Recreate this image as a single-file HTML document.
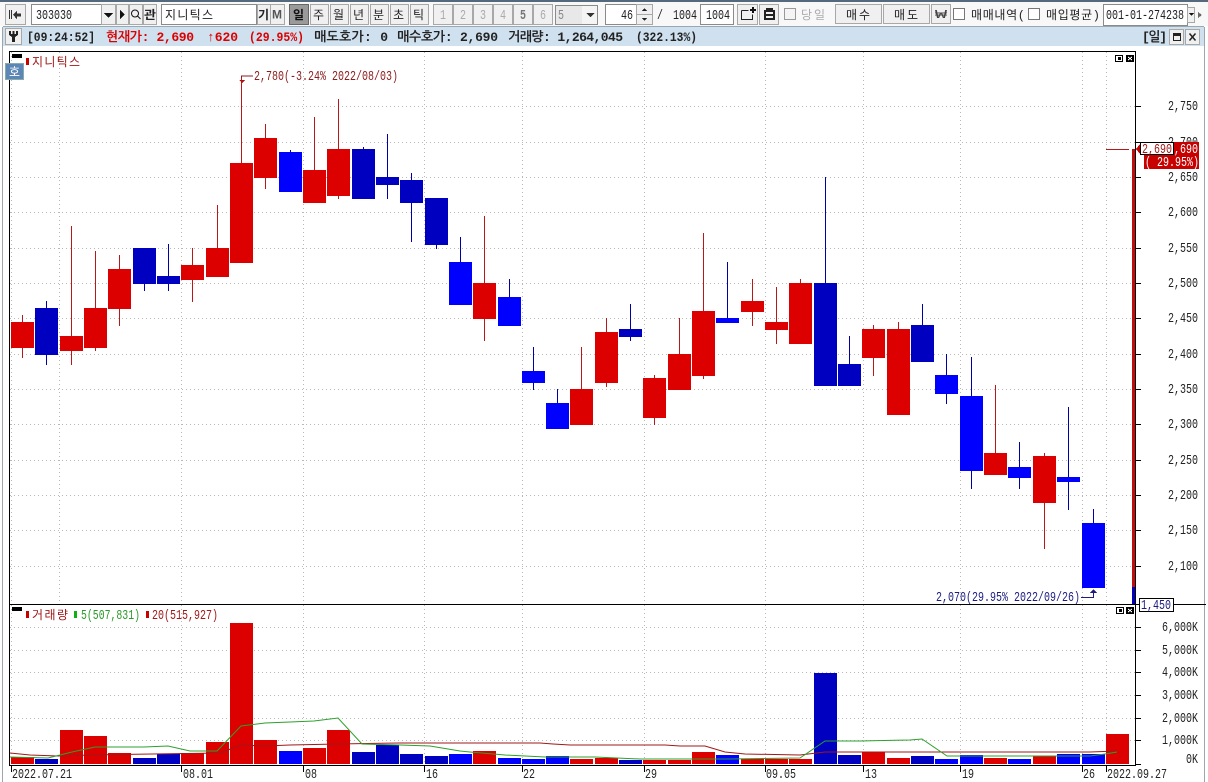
<!DOCTYPE html>
<html><head><meta charset="utf-8"><title>차트</title>
<style>
html,body{margin:0;padding:0;background:#fff;width:1208px;height:782px;overflow:hidden}
svg{display:block}
text{font-family:"Liberation Mono","NanumGothic","Noto Sans CJK KR",monospace;font-size:14px;fill:#222}
.k{font-family:"Liberation Mono","Noto Sans CJK KR","NanumGothic",sans-serif;font-size:12px}
.b{font-weight:bold;font-size:13px}
.btn{fill:#f0f0f0;stroke:#a8a8a8}
.inp{fill:#fff;stroke:#8a8a8a}
</style></head><body>
<svg xmlns="http://www.w3.org/2000/svg" width="1208" height="782" viewBox="0 0 1208 782" shape-rendering="crispEdges">
<rect width="1208" height="782" fill="#fff"/>
<rect width="1208" height="2" fill="#56687c"/>
<rect y="2" width="1208" height="24" fill="#f8f8f8"/>
<rect x="2" y="27" width="1" height="755" fill="#a0a4ac"/>
<rect x="1204" y="27" width="1" height="755" fill="#a0a4ac"/>
<rect x="3" y="27" width="1201" height="19" fill="#cfe0ee"/>
<rect x="3" y="26" width="1201" height="1" fill="#9aa8b4"/>

<!-- toolbar -->
<rect class="btn" x="5.5" y="4.5" width="20" height="20"/>
<path d="M9 10h1v9h-1zM11 10h1v9h-1zM13 14.5l4-4v3h4v3h-4v3z" fill="#333"/>
<rect class="inp" x="31.5" y="4.5" width="70" height="20"/>
<text x="36" y="19" textLength="36" lengthAdjust="spacingAndGlyphs">303030</text>
<rect class="btn" x="101.5" y="4.5" width="14" height="20"/><path d="M104 13h9l-4.500 5z" fill="#111"/>
<rect class="btn" x="116.500" y="4.500" width="12" height="20"/><path d="M120 10l5 4.500-5 4.500z" fill="#111"/>
<rect class="btn" x="129.500" y="4.500" width="13" height="20"/>
<circle cx="135" cy="13.500" r="3.500" fill="none" stroke="#111" shape-rendering="auto"/><path d="M137.500 16l3 3" stroke="#111" shape-rendering="auto"/>
<rect class="btn" x="143.500" y="4.500" width="13" height="20"/>
<text class="k" x="144" y="19" textLength="12" lengthAdjust="spacingAndGlyphs" style="font-weight:bold">관</text>
<rect class="inp" x="161.500" y="4.500" width="95" height="20"/>
<text class="k" x="165" y="19" textLength="48">지니틱스</text>
<rect class="btn" x="257.500" y="4.500" width="13" height="20"/>
<text class="k" x="258" y="19" style="font-weight:bold">기</text>
<rect class="btn" x="270.500" y="4.500" width="14" height="20"/>
<text x="272" y="18.500" style="font-family:'Liberation Sans';font-size:12px;font-weight:bold;fill:#555">M</text>
<rect x="289.500" y="4.500" width="19" height="20" fill="#9a9a9a" stroke="#666"/>
<text class="k" x="293" y="19" style="font-weight:bold;fill:#111">일</text>
<rect class="btn" x="310.500" y="4.500" width="18" height="20"/><text class="k" x="313" y="19">주</text>
<rect class="btn" x="330.500" y="4.500" width="18" height="20"/><text class="k" x="333" y="19">월</text>
<rect class="btn" x="350.500" y="4.500" width="18" height="20"/><text class="k" x="353" y="19">년</text>
<rect class="btn" x="370.500" y="4.500" width="18" height="20"/><text class="k" x="373" y="19">분</text>
<rect class="btn" x="390.500" y="4.500" width="18" height="20"/><text class="k" x="393" y="19">초</text>
<rect class="btn" x="410.500" y="4.500" width="18" height="20"/><text class="k" x="413" y="19">틱</text>
<g style="fill:#a0a0a0">
<rect class="btn" x="433.500" y="4.500" width="19" height="20"/><text x="440" y="19" style="fill:#aaa" textLength="6" lengthAdjust="spacingAndGlyphs">1</text>
<rect class="btn" x="453.500" y="4.500" width="19" height="20"/><text x="460" y="19" style="fill:#aaa" textLength="6" lengthAdjust="spacingAndGlyphs">2</text>
<rect class="btn" x="473.500" y="4.500" width="19" height="20"/><text x="480" y="19" style="fill:#aaa" textLength="6" lengthAdjust="spacingAndGlyphs">3</text>
<rect class="btn" x="493.500" y="4.500" width="19" height="20"/><text x="500" y="19" style="fill:#aaa" textLength="6" lengthAdjust="spacingAndGlyphs">4</text>
<rect class="btn" x="513.500" y="4.500" width="19" height="20"/><text x="520" y="19" style="fill:#777;font-weight:bold" textLength="6" lengthAdjust="spacingAndGlyphs">5</text>
<rect class="btn" x="533.500" y="4.500" width="19" height="20"/><text x="540" y="19" style="fill:#aaa" textLength="6" lengthAdjust="spacingAndGlyphs">6</text>
</g>
<rect x="555.500" y="5.500" width="42" height="19" fill="#eee" stroke="#8a8a8a"/>
<rect x="556" y="6" width="26" height="18" fill="#e8e8e8"/>
<text x="558" y="19" style="fill:#888" textLength="6" lengthAdjust="spacingAndGlyphs">5</text>
<rect x="582" y="6" width="15" height="18" fill="#f4f4f4"/>
<path d="M586 13h9l-4.500 4z" fill="#333"/>
<rect class="inp" x="605.500" y="4.500" width="31" height="20"/>
<text x="621" y="19" textLength="12" lengthAdjust="spacingAndGlyphs">46</text>
<rect class="btn" x="636.500" y="4.500" width="16" height="10"/><rect class="btn" x="636.500" y="14.500" width="16" height="10"/>
<path d="M642 11h5l-2.500-3zM642 18h5l-2.500 3z" fill="#222"/>
<text x="657" y="19" textLength="6" lengthAdjust="spacingAndGlyphs">/</text>
<text x="673" y="19" textLength="24" lengthAdjust="spacingAndGlyphs">1004</text>
<rect class="inp" x="700.500" y="4.500" width="33" height="20" stroke="#444"/>
<text x="706" y="19" textLength="24" lengthAdjust="spacingAndGlyphs">1004</text>
<rect class="btn" x="737.500" y="4.500" width="20" height="20"/>
<path d="M741.500 10.500h7M741.500 10.500v9h11v-5" fill="none" stroke="#222"/><path d="M750 9h2V7h2v2h2v2h-2v2h-2v-2h-2z" fill="#111"/>
<rect class="btn" x="759.500" y="4.500" width="19" height="20"/>
<path d="M764 10h11v10h-11zM766 8h7v2h-7z" fill="#222"/><rect x="766" y="12" width="7" height="2" fill="#f0f0f0"/><rect x="766" y="16" width="7" height="2" fill="#f0f0f0"/>
<rect x="784.500" y="8.500" width="11" height="11" fill="#f4f4f4" stroke="#999"/>
<text class="k" x="801" y="19" style="fill:#aaa" textLength="24">당일</text>
<rect class="btn" x="835.500" y="4.500" width="46" height="19"/><text class="k" x="846" y="19" textLength="24">매수</text>
<rect class="btn" x="883.500" y="4.500" width="46" height="19"/><text class="k" x="894" y="19" textLength="24">매도</text>
<rect class="btn" x="931.500" y="4.500" width="19" height="19"/><text class="k" x="935" y="18" textLength="12" lengthAdjust="spacingAndGlyphs" style="fill:#444;font-size:12px">₩</text>
<rect x="953.500" y="8.500" width="11" height="11" fill="#fff" stroke="#777"/>
<text class="k" x="971" y="19" textLength="54">매매내역(</text>
<rect x="1028.500" y="8.500" width="11" height="11" fill="#fff" stroke="#777"/>
<text class="k" x="1046" y="19" textLength="54">매입평균)</text>
<rect class="inp" x="1103.500" y="4.500" width="84" height="21" stroke="#555"/>
<text x="1106" y="19" textLength="78" lengthAdjust="spacingAndGlyphs">001-01-274238</text>
<rect class="btn" x="1187.500" y="7.500" width="7" height="15"/>
<path d="M1189 13h5l-2.500 3z" fill="#111"/><path d="M1198 12l4 3-4 3z" fill="#666"/>

<!-- info row -->
<rect class="btn" x="5.500" y="28.500" width="16" height="16"/>
<path d="M9 31v4l3 2v5h3v-5l3-2v-4h-2v3h-1.500v-3h-2v3H11v-3z" fill="#222"/>
<text class="b" x="27" y="41" textLength="68" lengthAdjust="spacingAndGlyphs">[09:24:52]</text>
<text class="b" x="106" y="41" textLength="88" style="fill:#dc0000">현재가: 2,690</text>
<text class="b" x="207" y="41" textLength="31" style="fill:#dc0000">↑620</text>
<text class="b" x="249" y="41" textLength="55" lengthAdjust="spacingAndGlyphs" style="fill:#dc0000">(29.95%)</text>
<text class="b" x="314" y="41" textLength="74">매도호가: 0</text>
<text class="b" x="397" y="41" textLength="101">매수호가: 2,690</text>
<text class="b" x="508" y="41" textLength="115">거래량: 1,264,045</text>
<text class="b" x="636" y="41" textLength="61" lengthAdjust="spacingAndGlyphs">(322.13%)</text>
<text class="b" x="1142" y="41" textLength="25">[일]</text>
<rect class="btn" x="1169.500" y="29.500" width="14" height="15"/><path d="M1173 33h8v8h-8zM1174 36v4h6v-4z" fill="#222" fill-rule="evenodd"/>
<rect class="btn" x="1185.500" y="29.500" width="14" height="15"/><path d="M1189.500 33.500l6 7M1195.500 33.500l-6 7" stroke="#222" stroke-width="1.500" shape-rendering="auto"/>

<!-- grid -->
<g stroke="#b8b8b8" stroke-dasharray="1 3" fill="none">
<path d="M10 106.500H1135M10 142.500H1135M10 177.500H1135M10 212.500H1135M10 248.500H1135M10 283.500H1135M10 318.500H1135M10 354.500H1135M10 389.500H1135M10 424.500H1135M10 460.500H1135M10 495.500H1135M10 530.500H1135M10 566.500H1135"/>
<path d="M11.500 52V604M59.500 52V604M181.500 52V604M303.500 52V604M424.500 52V604M522.500 52V604M644.500 52V604M765.500 52V604M863.500 52V604M960.500 52V604M1082.500 52V604M1106.500 52V604"/>
<path d="M10 627.500H1135M10 650.500H1135M10 672.500H1135M10 695.500H1135M10 718.500H1135M10 740.500H1135"/>
<path d="M11.500 605V765M181.500 605V765M303.500 605V765M424.500 605V765M522.500 605V765M644.500 605V765M765.500 605V765M863.500 605V765M960.500 605V765M1082.500 605V765M1106.500 605V765"/>
</g>

<!-- wicks -->
<path stroke="#b81818" fill="none" d="M22.500 315V358M71.500 226V365M95.500 251V351M119.500 255V326M192.500 248V302M217.500 205V277M241.500 78V263M265.500 124V189M314.500 117V203M338.500 99V199M484.500 216V341M581.500 347V425M606.500 318V387M654.500 375V425M679.500 318V390M703.500 233V379M752.500 279V326M776.500 287V344M800.500 279V344M873.500 325V376M898.500 322V415M995.500 385V475M1044.500 453V549"/>
<path stroke="#0000a8" fill="none" d="M46.500 301V365M144.500 248V291M168.500 244V291M363.500 147V199M387.500 134V199M411.500 173V242M436.500 198V249M630.500 304V341M825.500 177V386M849.500 336V386M922.500 304V362M290.500 150V192M460.500 237V305M509.500 279V326M533.500 347V390M557.500 389V429M727.500 262V323M946.500 354V404M971.500 357V489M1019.500 442V489M1068.500 407V510M1093.500 509V588"/>
<!-- bodies -->
<path fill="#dc0000" d="M11 322h23v26h-23zM60 336h23v15h-23zM84 308h23v40h-23zM108 269h23v40h-23zM181 265h23v15h-23zM206 248h23v29h-23zM230 163h23v100h-23zM254 138h23v40h-23zM303 170h23v33h-23zM327 149h23v47h-23zM473 283h23v36h-23zM570 389h23v36h-23zM595 332h23v51h-23zM643 378h23v40h-23zM668 354h23v36h-23zM692 311h23v65h-23zM741 301h23v11h-23zM765 322h23v8h-23zM789 283h23v61h-23zM862 329h23v29h-23zM887 329h23v86h-23zM984 453h23v22h-23zM1033 456h23v47h-23z"/>
<path fill="#0000c0" d="M35 308h23v47h-23zM133 248h23v36h-23zM157 276h23v8h-23zM352 149h23v50h-23zM376 177h23v8h-23zM400 180h23v23h-23zM425 198h23v47h-23zM619 329h23v8h-23zM814 283h23v103h-23zM838 364h23v22h-23zM911 325h23v37h-23z"/>
<path fill="#0000ff" d="M279 152h23v40h-23zM449 262h23v43h-23zM498 297h23v29h-23zM522 371h23v12h-23zM546 403h23v26h-23zM716 318h23v5h-23zM935 375h23v19h-23zM960 396h23v75h-23zM1008 467h23v11h-23zM1057 477h23v5h-23zM1082 523h23v65h-23z"/>
<rect x="1106" y="149" width="23" height="1" fill="#b81818"/>
<rect x="1132" y="149" width="4" height="438" fill="#c00d0d"/>
<rect x="1132" y="587" width="4" height="17" fill="#0000c0"/>

<!-- volume bars -->
<path fill="#dc0000" d="M11 757h23v7h-23zM60 730h23v34h-23zM84 736h23v28h-23zM108 753h23v11h-23zM181 753h23v11h-23zM206 742h23v22h-23zM230 623h23v141h-23zM254 740h23v24h-23zM303 748h23v16h-23zM327 730h23v34h-23zM473 751h23v13h-23zM570 759h23v5h-23zM595 758h23v6h-23zM643 760h23v4h-23zM668 760h23v4h-23zM692 752h23v12h-23zM741 759h23v5h-23zM765 759h23v5h-23zM789 759h23v5h-23zM862 752h23v12h-23zM887 758h23v6h-23zM984 758h23v6h-23zM1033 756h23v8h-23zM1106 734h23v30h-23z"/>
<path fill="#0000c0" d="M35 759h23v5h-23zM133 758h23v6h-23zM157 754h23v10h-23zM352 752h23v12h-23zM376 745h23v19h-23zM400 754h23v10h-23zM425 756h23v8h-23zM619 760h23v4h-23zM814 673h23v91h-23zM838 755h23v9h-23zM911 756h23v8h-23z"/>
<path fill="#0000ff" d="M279 751h23v13h-23zM449 754h23v10h-23zM498 758h23v6h-23zM522 759h23v5h-23zM546 756h23v8h-23zM716 755h23v9h-23zM935 759h23v5h-23zM960 755h23v9h-23zM1008 759h23v5h-23zM1057 754h23v10h-23zM1082 754h23v10h-23z"/>
<!-- MAs -->
<polyline shape-rendering="auto" fill="none" stroke="#a01818" stroke-width="1" points="10,753 30,755 58,756 90,755 220,753 241,745 265,746 290,745 338,744 400,743 540,743 553,744 570,745 665,745 680,746 705,746 725,752 745,754 800,755 825,752 860,752 1090,752 1117,751"/>
<polyline shape-rendering="auto" fill="none" stroke="#2ca02c" stroke-width="1" points="10,757 48,758 60,755 72,752 95,747 144,747 168,746 190,751 217,751 241,726 265,723 290,722 314,721 338,718 362,744 400,745 430,746 460,751 470,752 505,755 545,757 595,757 640,759 730,759 800,758 825,741 860,741 910,740 922,739 947,756 1090,756 1105,754 1117,752"/>

<!-- frame -->
<rect x="9" y="51" width="1" height="715" fill="#000"/>
<rect x="9" y="51" width="1127" height="1" fill="#000"/>
<rect x="1135" y="51" width="1" height="715" fill="#000"/>
<rect x="9" y="604" width="1197" height="1" fill="#000"/>
<rect x="9" y="765" width="1127" height="1" fill="#000"/>

<!-- main legend -->
<rect x="12" y="54" width="10" height="4" fill="#000"/>
<rect x="5.500" y="63.500" width="18" height="16" fill="#5c86b6" stroke="#8aa"/>
<text class="k" x="9" y="76" style="fill:#fff">호</text>
<rect x="26" y="58" width="3" height="7" fill="#c80000"/>
<text class="k" x="32" y="66" textLength="48" style="fill:#a01818">지니틱스</text>
<text x="254" y="80" textLength="144" lengthAdjust="spacingAndGlyphs" style="fill:#8c1c1c">2,780(-3.24% 2022/08/03)</text>
<path d="M241.500 78V76H253" fill="none" stroke="#8c1c1c"/><path d="M239 80h6l-3 3z" fill="#b01010"/>
<text x="936" y="601" textLength="144" lengthAdjust="spacingAndGlyphs" style="fill:#1c1c80">2,070(29.95% 2022/09/26)</text>
<path d="M1081 597.500H1093.500V592" fill="none" stroke="#1c1c80"/><path d="M1090 593h7l-3.500-4z" fill="#1c1c80"/>
<!-- pane buttons -->
<rect x="1115.500" y="55.500" width="7" height="6" fill="#fff" stroke="#000"/><rect x="1118" y="57" width="3" height="3" fill="#000"/>
<rect x="1126" y="55" width="8" height="7" fill="#000"/><path d="M1128 57l4 3M1132 57l-4 3" stroke="#fff"/>
<rect x="1116.500" y="607.500" width="7" height="6" fill="#fff" stroke="#000"/><rect x="1119" y="609" width="3" height="3" fill="#000"/>
<rect x="1126" y="607" width="8" height="7" fill="#000"/><path d="M1128 609l4 3M1132 609l-4 3" stroke="#fff"/>

<!-- price axis -->
<path stroke="#000" d="M1136 106.500h5M1136 142.500h5M1136 177.500h5M1136 212.500h5M1136 248.500h5M1136 283.500h5M1136 318.500h5M1136 354.500h5M1136 389.500h5M1136 424.500h5M1136 460.500h5M1136 495.500h5M1136 530.500h5M1136 566.500h5M1136 627.500h5M1136 650.500h5M1136 672.500h5M1136 695.500h5M1136 718.500h5M1136 740.500h5M1136 764.500h5"/>
<g text-anchor="start">
<text x="1168" y="110" textLength="30" lengthAdjust="spacingAndGlyphs">2,750</text>
<text x="1168" y="146" textLength="30" lengthAdjust="spacingAndGlyphs">2,700</text>
<text x="1168" y="181" textLength="30" lengthAdjust="spacingAndGlyphs">2,650</text>
<text x="1168" y="216" textLength="30" lengthAdjust="spacingAndGlyphs">2,600</text>
<text x="1168" y="252" textLength="30" lengthAdjust="spacingAndGlyphs">2,550</text>
<text x="1168" y="287" textLength="30" lengthAdjust="spacingAndGlyphs">2,500</text>
<text x="1168" y="322" textLength="30" lengthAdjust="spacingAndGlyphs">2,450</text>
<text x="1168" y="358" textLength="30" lengthAdjust="spacingAndGlyphs">2,400</text>
<text x="1168" y="393" textLength="30" lengthAdjust="spacingAndGlyphs">2,350</text>
<text x="1168" y="428" textLength="30" lengthAdjust="spacingAndGlyphs">2,300</text>
<text x="1168" y="464" textLength="30" lengthAdjust="spacingAndGlyphs">2,250</text>
<text x="1168" y="499" textLength="30" lengthAdjust="spacingAndGlyphs">2,200</text>
<text x="1168" y="534" textLength="30" lengthAdjust="spacingAndGlyphs">2,150</text>
<text x="1168" y="570" textLength="30" lengthAdjust="spacingAndGlyphs">2,100</text>
<text x="1162" y="631" textLength="36" lengthAdjust="spacingAndGlyphs">6,000K</text>
<text x="1162" y="654" textLength="36" lengthAdjust="spacingAndGlyphs">5,000K</text>
<text x="1162" y="676" textLength="36" lengthAdjust="spacingAndGlyphs">4,000K</text>
<text x="1162" y="699" textLength="36" lengthAdjust="spacingAndGlyphs">3,000K</text>
<text x="1162" y="722" textLength="36" lengthAdjust="spacingAndGlyphs">2,000K</text>
<text x="1162" y="744" textLength="36" lengthAdjust="spacingAndGlyphs">1,000K</text>
<text x="1186" y="763" textLength="12" lengthAdjust="spacingAndGlyphs">0K</text>
</g>
<!-- last price labels -->
<rect x="1144" y="142" width="55" height="27" fill="#c80000"/>
<text x="1168" y="153" textLength="30" lengthAdjust="spacingAndGlyphs" style="fill:#fff">2,690</text>
<text x="1145" y="166" textLength="54" lengthAdjust="spacingAndGlyphs" style="fill:#fff">( 29.95%)</text>
<path d="M1136 149l4-5v10z" fill="#c80000"/>
<rect x="1140.500" y="142.500" width="33" height="12" fill="#fff" stroke="#000"/>
<text x="1142" y="153" textLength="30" lengthAdjust="spacingAndGlyphs" style="fill:#a01818">2,690</text>
<rect x="1139.500" y="598.500" width="34" height="13" fill="#fff" stroke="#000"/>
<text x="1141" y="609" textLength="30" lengthAdjust="spacingAndGlyphs" style="fill:#1c1c80">1,450</text>

<!-- volume legend -->
<rect x="12" y="607" width="10" height="4" fill="#000"/>
<rect x="26" y="611" width="3" height="7" fill="#c80000"/>
<text class="k" x="32" y="619" textLength="36" style="fill:#a01818">거래량</text>
<rect x="74" y="611" width="3" height="7" fill="#10b010"/>
<text x="81" y="619" textLength="59" lengthAdjust="spacingAndGlyphs" style="fill:#2a9a2a">5(507,831)</text>
<rect x="146" y="611" width="3" height="7" fill="#c80000"/>
<text x="152" y="619" textLength="66" lengthAdjust="spacingAndGlyphs" style="fill:#a01818">20(515,927)</text>

<!-- date axis -->
<path stroke="#000" d="M11.500 766v6M181.500 766v6M303.500 766v6M424.500 766v6M522.500 766v6M644.500 766v6M765.500 766v6M863.500 766v6M960.500 766v6M1082.500 766v6M1106.500 766v6"/>
<text x="12" y="778" textLength="60" lengthAdjust="spacingAndGlyphs">2022.07.21</text>
<text x="183" y="778" textLength="30" lengthAdjust="spacingAndGlyphs">08.01</text>
<text x="305" y="778" textLength="12" lengthAdjust="spacingAndGlyphs">08</text>
<text x="426" y="778" textLength="12" lengthAdjust="spacingAndGlyphs">16</text>
<text x="523" y="778" textLength="12" lengthAdjust="spacingAndGlyphs">22</text>
<text x="645" y="778" textLength="12" lengthAdjust="spacingAndGlyphs">29</text>
<text x="766" y="778" textLength="30" lengthAdjust="spacingAndGlyphs">09.05</text>
<text x="865" y="778" textLength="12" lengthAdjust="spacingAndGlyphs">13</text>
<text x="962" y="778" textLength="12" lengthAdjust="spacingAndGlyphs">19</text>
<text x="1083" y="778" textLength="12" lengthAdjust="spacingAndGlyphs">26</text>
<text x="1107" y="778" textLength="60" lengthAdjust="spacingAndGlyphs">2022.09.27</text>
</svg>
</body></html>
